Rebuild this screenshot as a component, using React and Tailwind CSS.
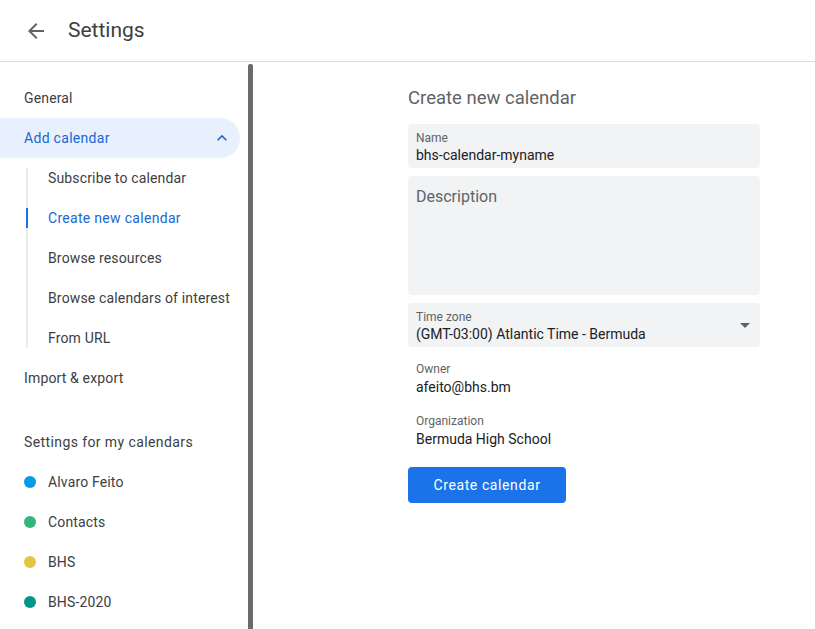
import React from 'react';

const subItems = ['Subscribe to calendar', 'Create new calendar', 'Browse resources', 'Browse calendars of interest', 'From URL'];

const calendars = [
    { name: 'Alvaro Feito', color: 'bg-[#039be5]' },
    { name: 'Contacts', color: 'bg-[#33b679]' },
    { name: 'BHS', color: 'bg-[#e4c441]' },
    { name: 'BHS-2020', color: 'bg-[#009688]' },
];

const App = () => {
    return (
        <div className="h-[629px] w-[815px] overflow-hidden bg-white text-[#3c4043] font-['Roboto',sans-serif]">
            {/* header */}
            <header className="flex h-[62px] items-center border-b border-[#dadce0]">
                <button className="ml-[24px] flex h-[24px] w-[24px] items-center justify-center text-[#5f6368]">
                    <svg width="24" height="24" viewBox="0 0 24 24" fill="currentColor">
                        <path d="M20 11H7.83l5.59-5.59L12 4l-8 8 8 8 1.41-1.41L7.83 13H20v-2z" />
                    </svg>
                </button>
                <h1 className="ml-[20px] -mt-[2px] text-[21px] leading-[28px] text-[#3c4043]">Settings</h1>
            </header>

            <div className="flex h-[567px]">
                {/* sidebar */}
                <aside className="relative w-[256px] shrink-0 pt-[16px] text-sm tracking-[0.15px]">
                    <div className="flex h-[40px] items-center pl-[24px]">General</div>
                    <div className="flex h-[40px] w-[240px] items-center justify-between rounded-r-full bg-[#e8f0fe] pl-[24px] pr-[8px] tracking-[0.3px] text-[#1967d2]">
                        <span>Add calendar</span>
                        <svg width="20" height="20" viewBox="0 0 24 24" fill="currentColor">
                            <path d="M7.41 15.41L12 10.83l4.59 4.58L18 14l-6-6-6 6z" />
                        </svg>
                    </div>
                    <div className="relative ml-[26px]">
                        <span className="absolute left-0 top-[10px] bottom-[10px] w-[2px] bg-[#e8eaed]" />
                        {subItems.map((item) => {
                            const active = item === 'Create new calendar';
                            return (
                                <div
                                    key={item}
                                    className={
                                        active
                                            ? 'relative flex h-[40px] items-center pl-[22px] tracking-[0.3px] text-[#1967d2]'
                                            : 'relative flex h-[40px] items-center pl-[22px]'
                                    }
                                >
                                    {active && <span className="absolute left-0 top-[10px] h-[20px] w-[2px] bg-[#1a73e8]" />}
                                    {item}
                                </div>
                            );
                        })}
                    </div>
                    <div className="flex h-[40px] items-center pl-[24px]">Import &amp; export</div>
                    <div className="mt-[24px] flex h-[40px] items-center pl-[24px] tracking-[0.4px]">
                        Settings for my calendars
                    </div>
                    {calendars.map((c) => (
                        <div key={c.name} className="flex h-[40px] items-center pl-[24px]">
                            <span className={`h-[12px] w-[12px] rounded-full ${c.color}`} />
                            <span className="ml-[12px]">{c.name}</span>
                        </div>
                    ))}
                    {/* scrollbar thumb */}
                    <div className="absolute right-[3px] top-[2px] bottom-0 w-[5px] rounded-t-[2px] bg-[#6e6a67]" />
                </aside>

                {/* main */}
                <main className="flex-1 pl-[152px] pt-[22px]">
                    <div className="w-[352px]">
                        <h2 className="text-[18.5px] leading-[28px] text-[#5f6368]">Create new calendar</h2>

                        <div className="mt-[12px] h-[44px] rounded-[4px] bg-[#f1f3f4] px-[8px] pt-[7px]">
                            <div className="text-[12px] leading-[14px] text-[#5f6368]">Name</div>
                            <div className="text-sm leading-[20px] text-[#202124]">bhs-calendar-myname</div>
                        </div>

                        <div className="mt-[8px] h-[119px] rounded-[4px] bg-[#f1f3f4] px-[8px] pt-[10px]">
                            <div className="text-[16px] leading-[22px] text-[#5f6368]">Description</div>
                        </div>

                        <div className="mt-[8px] flex h-[44px] justify-between rounded-[4px] bg-[#f1f3f4] px-[8px] pt-[7px]">
                            <div>
                                <div className="text-[12px] leading-[14px] text-[#5f6368]">Time zone</div>
                                <div className="text-sm leading-[20px] text-[#202124]">(GMT-03:00) Atlantic Time - Bermuda</div>
                            </div>
                            <svg width="10" height="5" viewBox="0 0 10 5" className="mr-[2px] mt-[13px] text-[#5f6368]" fill="currentColor">
                                <path d="M0 0l5 5 5-5z" />
                            </svg>
                        </div>

                        <div className="mt-[14px] px-[8px]">
                            <div className="text-[12px] leading-[16px] text-[#5f6368]">Owner</div>
                            <div className="text-sm leading-[20px] text-[#202124]">afeito@bhs.bm</div>
                        </div>

                        <div className="mt-[16px] px-[8px]">
                            <div className="text-[12px] leading-[16px] text-[#5f6368]">Organization</div>
                            <div className="text-sm leading-[20px] text-[#202124]">Bermuda High School</div>
                        </div>

                        <button className="mt-[18px] h-[36px] w-[158px] rounded-[4px] bg-[#1a73e8] text-sm tracking-[0.6px] text-white">
                            Create calendar
                        </button>
                    </div>
                </main>
            </div>
        </div>
    );
};

export default App;
